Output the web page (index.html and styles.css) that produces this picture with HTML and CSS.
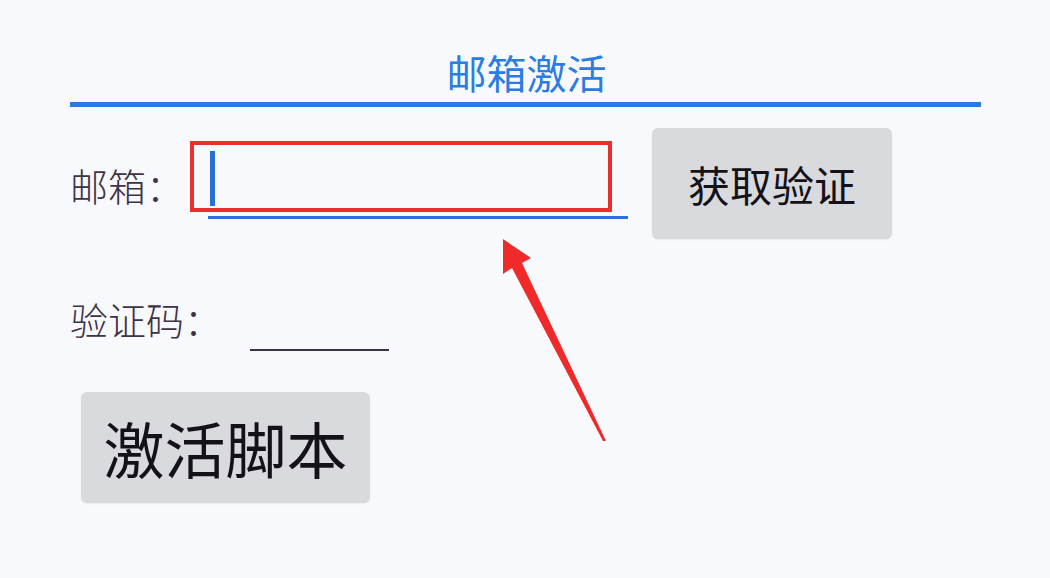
FILE: index.html
```html
<!DOCTYPE html>
<html lang="zh-CN">
<head>
<meta charset="utf-8">
<title>邮箱激活</title>
<link rel="stylesheet" href="styles.css">
</head>
<body>
<div class="page">
  <div class="title">邮箱激活</div>
  <div class="tab-line"></div>
  <div class="row row-email">
    <div class="label">邮箱：</div>
    <div class="field">
      <span class="cursor"></span>
      <div class="mark"></div>
    </div>
    <div class="btn btn-code">获取验证</div>
  </div>
  <div class="row row-code">
    <div class="label">验证码：</div>
    <div class="code-input"></div>
  </div>
  <div class="btn btn-activate">激活脚本</div>
  <svg class="arrow" width="1050" height="578" viewBox="0 0 1050 578">
    <polygon points="503,239 531,258 522,263 606,441 603,441 512,268 503,274" fill="#f02a2a"/>
  </svg>
</div>
</body>
</html>
```
FILE: styles.css
```css
html, body {
  margin: 0;
  padding: 0;
  background: #f8f9fc;
}
.page {
  position: relative;
  width: 1050px;
  height: 578px;
  box-sizing: border-box;
  padding: 52px 69px 0 70px;
  font-family: "Noto Sans CJK SC", "Noto Sans", sans-serif;
  overflow: hidden;
}
.title {
  text-align: center;
  font-size: 40px;
  line-height: 40px;
  height: 40px;
  color: #2b7de2;
  padding-left: 2px;
}
.tab-line {
  margin-top: 10px;
  height: 5px;
  background: #2a7be6;
}
.row {
  display: flex;
  align-items: flex-start;
}
.row-email {
  margin-top: 21px;
}
.label {
  font-size: 38px;
  line-height: 44px;
  color: #3e3346;
  font-weight: 300;
}
.row-email .label {
  margin-top: 35px;
  width: 138px;
}
.field {
  position: relative;
  margin-top: 18px;
  width: 420px;
  height: 70px;
  border-bottom: 3px solid #2a71d9;
}
.cursor {
  position: absolute;
  left: 2px;
  top: 5px;
  width: 5px;
  height: 55px;
  background: #2a6fd8;
}
.mark {
  position: absolute;
  left: -18px;
  top: -5px;
  width: 422px;
  height: 71px;
  box-sizing: border-box;
  border: 4px solid #e8312f;
}
.btn {
  background: #d9dadd;
  border-radius: 6px;
  color: #141218;
  display: flex;
  align-items: center;
  justify-content: center;
  box-shadow: 0 1px 2px rgba(0,0,0,0.06);
}
.btn-code {
  margin-left: 24px;
  width: 240px;
  height: 111px;
  font-size: 42px;
}
.row-code {
  margin-top: 58px;
}
.code-input {
  margin-left: 28px;
  width: 139px;
  height: 52px;
  border-bottom: 2px solid #3e3346;
}
.btn-activate {
  margin-top: 41px;
  margin-left: 11px;
  width: 289px;
  height: 111px;
  font-size: 61px;
}
.arrow {
  position: absolute;
  left: 0;
  top: 0;
  pointer-events: none;
}
```
